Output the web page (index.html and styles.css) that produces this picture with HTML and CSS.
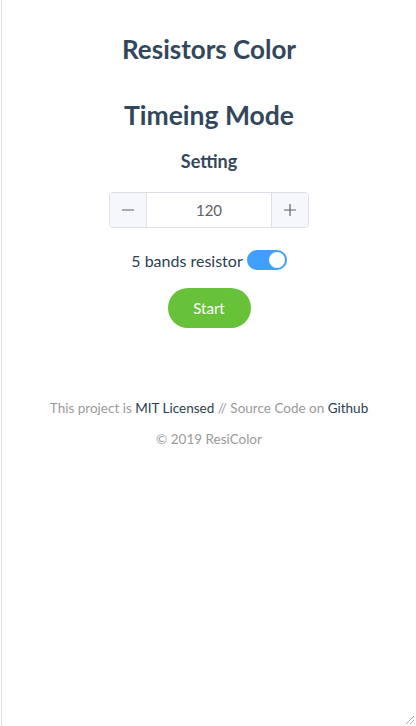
FILE: index.html
```html
<!DOCTYPE html>
<html>
<head>
<meta charset="utf-8">
<link rel="stylesheet" href="styles.css">
</head>
<body>
<div class="frame">
  <main class="app">
    <h1 class="title">Resistors Color</h1>
    <h2 class="mode">Timeing Mode</h2>
    <h3 class="setting">Setting</h3>
    <div class="number">
      <span class="btn minus"><svg width="14" height="14" viewBox="0 0 14 14"><path d="M1 7h12" stroke="#606266" stroke-width="1.2"/></svg></span>
      <span class="value">120</span>
      <span class="btn plus"><svg width="14" height="14" viewBox="0 0 14 14"><path d="M1 7h12M7 1v12" stroke="#606266" stroke-width="1.2"/></svg></span>
    </div>
    <div class="switch-row">
      <span class="label">5 bands resistor</span>
      <span class="switch"><span class="knob"></span></span>
    </div>
    <button class="start">Start</button>
    <footer class="footer">
      <p class="line">This project is <a>MIT Licensed</a> // Source Code on <a>Github</a></p>
      <p class="line">© 2019 ResiColor</p>
    </footer>
  </main>
  <svg class="grip" width="12" height="12" viewBox="0 0 12 12"><path d="M11 3L3 11M11 7L7 11" stroke="#aaa" stroke-width="1"/></svg>
</div>
</body>
</html>
```
FILE: styles.css
```css
html, body { margin: 0; padding: 0; height: 100%; background: #fff; }
body { font-family: Lato, "Noto Sans", sans-serif; color: #2c3e50; }
.frame { position: relative; height: 100%; margin-left: 1px; border-left: 1px solid #dedede; box-sizing: border-box; }
.app { display: flex; flex-direction: column; align-items: center; padding-top: 34px; }
.title { margin: 0; font-size: 26px; font-weight: 700; line-height: 30px; color: #33475b; }
.mode { margin: 35px 0 0; font-size: 26.5px; font-weight: 700; line-height: 32px; color: #33475b; }
.setting { margin: 20px 0 0; font-size: 18px; font-weight: 700; line-height: 20px; color: #33475b; }
.number { margin-top: 21px; display: flex; width: 200px; height: 36px; box-sizing: border-box; border: 1px solid #dcdfe6; border-radius: 4px; overflow: hidden; }
.btn { width: 36px; background: #f5f7fa; display: flex; align-items: center; justify-content: center; }
.minus { border-right: 1px solid #dcdfe6; }
.plus { border-left: 1px solid #dcdfe6; }
.value { flex: 1; display: flex; align-items: center; justify-content: center; font-size: 15px; color: #606266; }
.switch-row { margin-top: 21px; display: flex; align-items: center; gap: 4px; height: 22px; }
.label { font-size: 16px; color: #2c3e50; }
.switch { position: relative; width: 40px; height: 20px; border-radius: 10px; background: #409eff; }
.knob { position: absolute; top: 2px; right: 2px; width: 16px; height: 16px; border-radius: 50%; background: #fff; }
.start { margin-top: 17px; width: 83px; height: 40px; border: none; border-radius: 20px; background: #67c23a; color: #fff; font-family: inherit; font-size: 15px; padding: 0; }
.footer { margin-top: 71px; display: flex; flex-direction: column; align-items: center; }
.line { margin: 0 0 13px; font-size: 13.5px; line-height: 18px; color: #9a9a9a; }
.line a { color: #2c3e50; }
.grip { position: absolute; right: 1px; bottom: 1px; }
```
